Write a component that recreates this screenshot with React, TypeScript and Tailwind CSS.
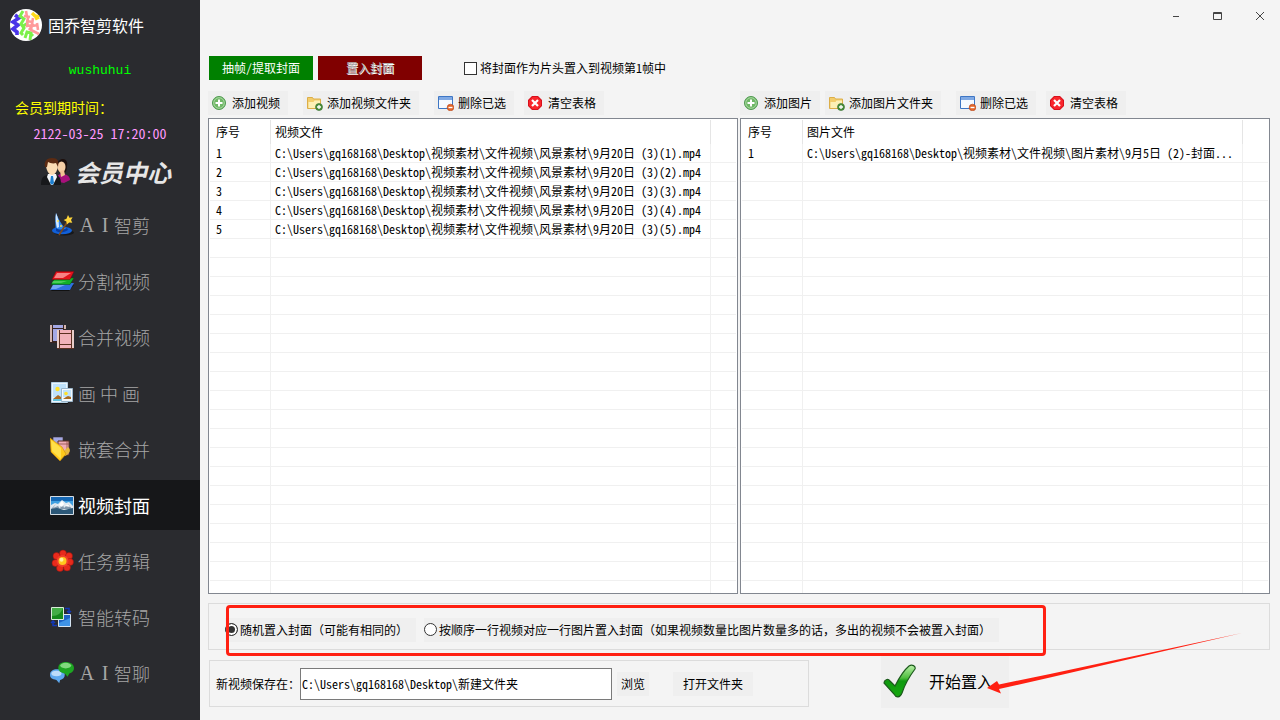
import React from 'react';

const videoFiles = [1, 2, 3, 4, 5].map((n) => `C:\\Users\\gq168168\\Desktop\\视频素材\\文件视频\\风景素材\\9月20日 (3)(${n}).mp4`);
const imageFiles = ['C:\\Users\\gq168168\\Desktop\\视频素材\\文件视频\\图片素材\\9月5日 (2)-封面...'];

function Logo() {
    return (
        <svg viewBox="0 0 32 32" className="size-8 shrink-0">
            <circle cx="16" cy="16" r="16" fill="#fff" />
            <g fill="none">
                <path d="M5 6l4 3-6 4 5 3-5 4 4 3v3" stroke="#4a35e8" strokeWidth="3.600" />
                <path d="M13 2l-3 5 4 3-3 5 3 4-3 5 2 2M13 17l5-3M15 29l2-6 4 1-1 7M20 24l3 3" stroke="#7cf04a" strokeWidth="3" />
                <path d="M16 2l1 6M14 7l6 1M16 12l7 1M18 8l-1 9 7-1M23 9l-2 12 8 4M19 21l3-4 6-1M27 14l1 7" stroke="#ff9a9a" strokeWidth="2.600" />
                <path d="M22 4l3 3 4 1M25 10l4-2" stroke="#ffd91a" strokeWidth="3.400" />
            </g>
        </svg>
    );
}

function PeopleIcon() {
    return (
        <svg viewBox="0 0 30 30" className="h-[30px] w-[30px] shrink-0">
            <path d="M16 23c0-5 2-6 5-6 4 0 8 2 8 6l-6 3-5-1z" fill="#a8107c" />
            <path d="M16 9c0-5 3-7 6-7s5 3 4 7c0 4-1 6-3 8l-6-3z" fill="#1d0f0c" />
            <ellipse cx="20.500" cy="10" rx="4" ry="5.500" fill="#f6cfa6" />
            <path d="M19 14l4-1 1 5-4 2z" fill="#f3c193" />
            <path d="M0 28c0-7 2-9 6-10h9c4 1 5 4 5 10z" fill="#17181b" />
            <path d="M7 17h8l1 3-4 8h-2l-4-8z" fill="#f2f5f8" />
            <path d="M10 19h2l1 7-2 2-2-2z" fill="#1d7fd0" />
            <path d="M5 8c0-3 2-5 6-5s6 2 6 5c0 5-3 10-6 10S5 13 5 8z" fill="#fbdcb4" />
            <path d="M4 10C3 5 5 1 11 1s7 3 6 9l-2-4c-3 1-6 0-8-1l-1 5z" fill="#5c2b12" />
        </svg>
    );
}

function WizardIcon() {
    return (
        <svg viewBox="0 0 24 24" className="size-6 shrink-0">
            <ellipse cx="14" cy="19.500" rx="10" ry="3" fill="#17181a" />
            <ellipse cx="12" cy="17.500" rx="10" ry="3.800" fill="#1160d8" />
            <path d="M6 0c-1 6-1 12 0 17 3 2 8 2 11-1-5-3-8-9-11-16z" fill="#2f86ee" />
            <path d="M6 0c-1 6 0 11 1 15l2-1C9 9 8 4 6 0z" fill="#d3e9ff" />
            <path d="M6 15c3 2 7 2 11 0l1 2c-4 3-9 3-12 1z" fill="#0a3da0" />
            <circle cx="8" cy="8" r="1" fill="#ffe24a" />
            <circle cx="11" cy="13" r="1" fill="#ffe24a" />
            <path d="M9 22l9-14" stroke="#7b4a1c" strokeWidth="1.600" />
            <path d="M18 2l1.400 2.700 3.200-.4-1.600 2.700 1.300 2.800-3.100-.3-2.300 2-.5-3-2.800-1.500 2.900-1.300z" fill="#ffd63a" />
        </svg>
    );
}

function LayersIcon() {
    return (
        <svg viewBox="0 0 24 24" className="h-6 w-6 shrink-0">
            <path d="M5 16h19l-5 6H1z" fill="#111" />
            <path d="M4 14h20l-4 7H0z" fill="#2f6fe0" />
            <path d="M3 16h12L6 20H1z" fill="#8fbcfc" opacity=".7" />
            <path d="M5 9h19l-4 6.500H1z" fill="#12b02a" stroke="#084d10" strokeWidth=".5" />
            <path d="M3 12h14l-6 2H2z" fill="#6fe07a" opacity=".6" />
            <path d="M6 2.500h18l-4 8H2z" fill="#e3121c" stroke="#7c070c" strokeWidth=".5" />
            <path d="M7 4h14l-8 5H4z" fill="#ffb0b0" opacity=".7" />
        </svg>
    );
}

function FilmsIcon() {
    return (
        <svg viewBox="0 0 24 24" className="size-6 shrink-0">
            <path d="M0 0h15v18H0z" fill="#3a2420" />
            <path d="M3 0h10v3H3zM3 4h10v12H3z" fill="#a3a8e4" />
            <path d="M0 0h2v17H0zM14 0h2v4h-2z" fill="#d3b5b0" />
            <path d="M7 5h17v19H7z" fill="#5b3020" />
            <path d="M10 5h11v3H10zM10 9h11v10H10zM10 20h11v3H10z" fill="#f2b2ba" />
            <path d="M7 5h2v18H7zM22 5h2v18h-2z" fill="#e9cdc8" />
        </svg>
    );
}

function PicturesIcon() {
    return (
        <svg viewBox="0 0 24 24" className="size-6 shrink-0">
            <path d="M2 2h16v21H2z" fill="#111" />
            <path d="M1.500 1.500h16v20h-16z" fill="#eaf5fd" stroke="#b5cfe2" />
            <path d="M3 3h13v13H3z" fill="#bfe2fb" />
            <circle cx="7.500" cy="8" r="2.200" fill="#ffe12b" />
            <path d="M3 18l5-4 3 2 4-4v6z" fill="#a86a22" />
            <path d="M3 18h12v2H3z" fill="#63c2dc" />
            <path d="M11.500 7.500h11v13h-11z" fill="#f4f9fd" stroke="#9bb7cc" />
            <path d="M13 9h8v7h-8z" fill="#bfe2fb" />
            <circle cx="16" cy="12.500" r="1.800" fill="#ffe12b" />
            <path d="M13 18l3-2 2-1 3 1v2z" fill="#a86a22" />
        </svg>
    );
}

function FolderFilmIcon() {
    return (
        <svg viewBox="0 0 24 24" className="size-6 shrink-0">
            <path d="M3 0h10v13H3z" fill="#a3a8e4" stroke="#40302c" strokeWidth=".6" />
            <path d="M8 4h11v14H8z" fill="#efabb4" stroke="#5b3020" />
            <path d="M8 7h11M17 4v14" stroke="#8d5048" strokeWidth=".8" />
            <path d="M18 10c4 3 1 7-3 9l-3-3z" fill="#e8b93c" />
            <path d="M0 1l12 9 4 7-6 7L1 15z" fill="#ffc91a" stroke="#c98b0a" strokeWidth=".6" />
            <path d="M1 3l10 8v11L2 14z" fill="#ffe04a" />
        </svg>
    );
}

function MountainIcon() {
    return (
        <svg viewBox="0 0 24 24" className="size-6 shrink-0">
            <path d="M.500 3.500h23v18H.500z" fill="#1668b4" stroke="#d5dde4" />
            <path d="M1 8h22v6H1z" fill="#3f9fe0" />
            <path d="M1 12l4-2 3 1 4-4 4 3 3-1 4 4v4H1z" fill="#dfe8f0" />
            <path d="M6 11l-3 4 5-2 2 3 2-7 2 6 4-4 4 5H1z" fill="#8097ac" />
            <path d="M9 12l3-4 2 3-2 3zM15 13l3-2 2 3z" fill="#fff" />
            <path d="M1 16l6-1 7 2 9-2v6H1z" fill="#2c5878" />
        </svg>
    );
}

function FlowerIcon() {
    return (
        <svg viewBox="0 0 24 24" className="size-6 shrink-0">
            <g fill="#e82a1c" stroke="#98120c" strokeWidth=".5">
                <circle cx="13" cy="4.500" r="3.500" />
                <circle cx="19" cy="7" r="3.500" />
                <circle cx="20" cy="13" r="3.500" />
                <circle cx="17" cy="18.500" r="3.500" />
                <circle cx="10" cy="19" r="3.500" />
                <circle cx="5.500" cy="14" r="3.500" />
                <circle cx="6.500" cy="7" r="3.500" />
            </g>
            <circle cx="12.500" cy="12" r="6" fill="#f0402a" />
            <circle cx="12.500" cy="12" r="4" fill="#ffc81e" />
            <circle cx="11.500" cy="10.800" r="2" fill="#fff0a0" />
        </svg>
    );
}

function ConvertIcon() {
    return (
        <svg viewBox="0 0 24 24" className="size-6 shrink-0">
            <path d="M8.500 9.500h12v12h-12z" fill="#1c62c4" stroke="#d5e4f2" />
            <path d="M9 18l11-5v8H9z" fill="#3f93e6" />
            <path d="M1.500 2.500h12v12h-12z" fill="#168a1c" stroke="#d8ecd8" />
            <path d="M2 3h11c-2 5-5 8-11 8z" fill="#62c562" opacity=".6" />
            <path d="M15 3.500h4v4M17 6l2 2 2-2M7 20.500H3v-3M1 18l2-2 2 2" fill="none" stroke="#1238b8" strokeWidth="1.500" />
        </svg>
    );
}

function ChatIcon() {
    return (
        <svg viewBox="0 0 26 24" className="size-6 shrink-0">
            <path d="M8 8c5 0 8 2 8 6 0 3-2 5-5 5.500L10 23l-3-3.500C2 19 0 17 0 14c0-4 3-6 8-6z" fill="#5ea8ee" />
            <ellipse cx="7" cy="12.500" rx="5.500" ry="3" fill="#d3e9fd" opacity=".8" />
            <path d="M17 0c5 0 9 2.500 9 6.500 0 3-2 5-5 6L19 16l-3-3.500c-4-.5-7-3-7-6C9 2.500 12 0 17 0z" fill="#1da522" />
            <ellipse cx="17" cy="4" rx="6" ry="3" fill="#9be696" opacity=".8" />
        </svg>
    );
}

function AddIcon() {
    return (
        <svg viewBox="0 0 16 16" className="size-4 shrink-0">
            <circle cx="7" cy="8" r="6.500" fill="#6fb766" stroke="#4f9a50" />
            <circle cx="7" cy="8" r="5.300" fill="none" stroke="#b6e0b0" strokeWidth=".8" />
            <path d="M7 4.500v7M3.500 8h7" stroke="#fff" strokeWidth="2" />
        </svg>
    );
}

function AddFolderIcon() {
    return (
        <svg viewBox="0 0 16 16" className="size-4 shrink-0">
            <path d="M.500 13.500v-11h5l1 1.500h7v9.500z" fill="#f3cd6b" stroke="#dcae48" />
            <path d="M1.500 13V7h5l1-1.500H13V13z" fill="#fdf0b5" />
            <circle cx="12" cy="12" r="3.500" fill="#4c8f3c" stroke="#2f6b28" strokeWidth=".6" />
            <path d="M12 10v4M10 12h4" stroke="#fff" strokeWidth="1.300" />
        </svg>
    );
}

function DeleteIcon() {
    return (
        <svg viewBox="0 0 16 16" className="size-4 shrink-0">
            <path d="M.500 1.500h14v12H.500z" fill="#f6faff" stroke="#3e76c4" />
            <path d="M1 2h13v3H1z" fill="#7fa9e4" />
            <circle cx="12.500" cy="12.500" r="3.300" fill="#e5662a" stroke="#b3451a" strokeWidth=".6" />
            <path d="M10.500 12.500h4" stroke="#fff" strokeWidth="1.400" />
        </svg>
    );
}

function ClearIcon() {
    return (
        <svg viewBox="0 0 16 16" className="size-4 shrink-0">
            <path d="M4 1h6l4 4v6l-4 4H4l-4-4V5z" fill="#d8101c" />
            <path d="M4.500 2h5L13 5.500v5L9.500 14h-5L1 10.500v-5z" fill="#f9262c" />
            <path d="M4 5l6 6M10 5l-6 6" stroke="#fff" strokeWidth="2.200" />
        </svg>
    );
}

function CheckIcon() {
    return (
        <svg viewBox="0 0 34 34" className="h-[34px] w-[34px] shrink-0">
            <defs>
                <linearGradient id="check" x1="0" y1="0" x2="0" y2="1">
                    <stop offset="0" stopColor="#b9f0a8" />
                    <stop offset=".4" stopColor="#4fbe3f" />
                    <stop offset=".5" stopColor="#0f9a0f" />
                    <stop offset="1" stopColor="#16a80f" />
                </linearGradient>
            </defs>
            <path
                d="M1 19c0-3 4-5 6-2l5 5C16 14 20 7 26 2c3-2 7 0 6 3-6 8-10 15-13 24-2 5-6 5-8 1z"
                fill="url(#check)"
                stroke="#1c5a1c"
                strokeWidth="1.200"
            />
        </svg>
    );
}

function Wide({ text }: { text: string }) {
    return <span className="w-[18px] text-center font-['Liberation_Serif',serif] text-xl font-normal">{text}</span>;
}

const menu = [
    { icon: <WizardIcon />, label: <><Wide text="A" /><Wide text="I" />智剪</> },
    { icon: <LayersIcon />, label: '分割视频' },
    { icon: <FilmsIcon />, label: '合并视频' },
    { icon: <PicturesIcon />, label: '画 中 画' },
    { icon: <FolderFilmIcon />, label: '嵌套合并' },
    { icon: <MountainIcon />, label: '视频封面', active: true },
    { icon: <FlowerIcon />, label: '任务剪辑' },
    { icon: <ConvertIcon />, label: '智能转码' },
    { icon: <ChatIcon />, label: <><Wide text="A" /><Wide text="I" />智聊</> },
];

function Sidebar() {
    return (
        <aside className="flex w-[200px] shrink-0 flex-col bg-[#2a2b2f]">
            <div className="mt-[9px] flex items-center gap-[6px] pl-[10px] text-base leading-8 text-white">
                <Logo />
                固乔智剪软件
            </div>
            <div className="mt-5 text-center font-['Liberation_Mono',monospace] text-[13px] leading-5 text-[#00ff00]">wushuhui</div>
            <div className="mt-4 pl-[15px] text-sm text-[#ffff00]">会员到期时间：</div>
            <div className="mt-[6px] text-center text-sm text-[#ff99ff]">2122-03-25 17:20:00</div>
            <a href="#vip" className="mt-[13px] flex items-center gap-1 pl-[41px] text-2xl leading-8 font-bold text-[#e6e6e6] italic">
                <PeopleIcon />
                会员中心
            </a>
            <nav className="mt-3 flex flex-col gap-[6px]">
                {menu.map((item, i) => (
                    <a
                        key={i}
                        href="#menu"
                        className={`flex h-[50px] items-center gap-1 pl-[50px] text-lg ${item.active ? 'bg-[#161719] text-white' : 'font-light text-[#a6a6a6]'}`}
                    >
                        {item.icon}
                        <span className="flex items-center leading-6 whitespace-pre [font-feature-settings:normal]">{item.label}</span>
                    </a>
                ))}
            </nav>
        </aside>
    );
}

function ToolButton({ icon, children }: { icon: React.ReactNode; children: React.ReactNode }) {
    return (
        <button type="button" className="flex h-6 items-center gap-1 bg-[#efefef] pr-2 pl-1 whitespace-nowrap">
            {icon}
            {children}
        </button>
    );
}

function FileTable({ title, files }: { title: string; files: string[] }) {
    const rows = Array.from({ length: 24 }, (_, i) => files[i]);
    return (
        <div className="min-h-0 flex-1 overflow-hidden border border-[#828790] bg-white p-px">
            <table className="w-full table-fixed border-separate border-spacing-0">
                <thead>
                    <tr className="h-6 text-left">
                        <th className="w-[61px] border-r border-[#e5e5e5] pl-[6px] font-normal">序号</th>
                        <th className="w-[440px] border-r border-[#e5e5e5] pl-1 font-normal">{title}</th>
                        <th></th>
                    </tr>
                </thead>
                <tbody>
                    {rows.map((file, i) => (
                        <tr key={i} className="h-[19px]">
                            <td className="border-r border-b border-[#f0f0f0] pl-[6px]">{file ? i + 1 : ''}</td>
                            <td className="truncate border-r border-b border-[#f0f0f0] pl-1">{file}</td>
                            <td className="border-b border-[#f0f0f0]"></td>
                        </tr>
                    ))}
                </tbody>
            </table>
        </div>
    );
}

export default function App() {
    return (
        <div className="flex h-screen overflow-hidden bg-[#f4f4f4] font-['Noto_Sans_CJK_SC',sans-serif] text-xs text-black [font-feature-settings:'hwid']">
            <Sidebar />
            <main className="flex min-w-0 flex-1 flex-col pr-[10px] pb-3 pl-2">
                <header className="-mr-[10px] flex h-8 shrink-0 justify-end text-[#444444]">
                    <button type="button" aria-label="最小化" className="flex w-[42px] items-center justify-center">
                        <svg viewBox="0 0 12 12" className="size-3"><path d="M4 6.500h6" stroke="currentColor" /></svg>
                    </button>
                    <button type="button" aria-label="最大化" className="flex w-[42px] items-center justify-center">
                        <svg viewBox="0 0 12 12" className="size-3">
                            <path d="M2.500 2.500h8v7h-8zM2 3.500h9" fill="none" stroke="currentColor" />
                        </svg>
                    </button>
                    <button type="button" aria-label="关闭" className="flex w-[42px] items-center justify-center">
                        <svg viewBox="0 0 12 12" className="size-3"><path d="M3 2l8 8M11 2l-8 8" stroke="currentColor" /></svg>
                    </button>
                </header>

                <div className="mt-6 flex items-center pl-px">
                    <button type="button" className="h-6 w-[104px] bg-[#008000] text-white">抽帧/提取封面</button>
                    <button type="button" className="ml-[5px] h-6 w-[104px] bg-[#800000] text-[#b0b0b0] [text-shadow:1px_1px_0_#fff]">
                        置入封面
                    </button>
                    <label className="ml-[42px] flex items-center gap-[3px]">
                        <input type="checkbox" className="size-[13px] appearance-none border border-[#333333] bg-white" />
                        将封面作为片头置入到视频第1帧中
                    </label>
                </div>

                {/* 视频列表 / 图片列表 */}
                <div className="mt-[11px] flex min-h-0 flex-1 gap-[2px]">
                    <section className="flex min-w-0 flex-1 flex-col gap-[3px]">
                        <div className="flex">
                            <ToolButton icon={<AddIcon />}>添加视频</ToolButton>
                            <div className="mr-[15px] ml-[15px]">
                                <ToolButton icon={<AddFolderIcon />}>添加视频文件夹</ToolButton>
                            </div>
                            <ToolButton icon={<DeleteIcon />}>删除已选</ToolButton>
                            <div className="ml-[10px]">
                                <ToolButton icon={<ClearIcon />}>清空表格</ToolButton>
                            </div>
                        </div>
                        <FileTable title="视频文件" files={videoFiles} />
                    </section>
                    <section className="flex min-w-0 flex-1 flex-col gap-[3px]">
                        <div className="flex">
                            <ToolButton icon={<AddIcon />}>添加图片</ToolButton>
                            <div className="mr-[15px] ml-[5px]">
                                <ToolButton icon={<AddFolderIcon />}>添加图片文件夹</ToolButton>
                            </div>
                            <ToolButton icon={<DeleteIcon />}>删除已选</ToolButton>
                            <div className="ml-[10px]">
                                <ToolButton icon={<ClearIcon />}>清空表格</ToolButton>
                            </div>
                        </div>
                        <FileTable title="图片文件" files={imageFiles} />
                    </section>
                </div>

                <div className="relative mt-[9px] flex h-[47px] shrink-0 items-center gap-2 border border-[#dcdcdc] pt-[6px] pl-4 whitespace-nowrap [font-feature-settings:normal]">
                    <label className="flex h-6 items-center gap-[2px] bg-[#efefef] pr-2">
                        <input
                            type="radio"
                            name="mode"
                            defaultChecked
                            className="size-[13px] appearance-none rounded-full border border-[#333333] bg-white checked:bg-[#333333] checked:shadow-[inset_0_0_0_2px_#fff]"
                        />
                        随机置入封面（可能有相同的）
                    </label>
                    <label className="flex h-6 items-center gap-[2px] bg-[#efefef] pr-2">
                        <input
                            type="radio"
                            name="mode"
                            className="size-[13px] appearance-none rounded-full border border-[#333333] bg-white checked:bg-[#333333] checked:shadow-[inset_0_0_0_2px_#fff]"
                        />
                        按顺序一行视频对应一行图片置入封面（如果视频数量比图片数量多的话，多出的视频不会被置入封面）
                    </label>
                    <div className="pointer-events-none absolute top-px left-[17px] h-[51px] w-[820px] rounded-[4px] border-3 border-[#ff2012]"></div>
                </div>

                <div className="mt-[6px] flex h-[52px] shrink-0 items-end pl-px">
                    <div className="mb-px flex h-[47px] items-center border border-[#dcdcdc] pr-[55px] pl-[6px] whitespace-nowrap">
                        <label htmlFor="savePath">新视频保存在：</label>
                        <input
                            id="savePath"
                            type="text"
                            defaultValue="C:\Users\gq168168\Desktop\新建文件夹"
                            className="h-8 w-[312px] border border-[#7a7a7a] bg-white px-px"
                        />
                        <button type="button" className="ml-[5px] h-6 w-8 bg-[#efefef] text-center">浏览</button>
                        <button type="button" className="ml-6 h-6 w-20 bg-[#efefef]">打开文件夹</button>
                    </div>
                    <div className="relative ml-[72px]">
                        <button type="button" className="flex h-[52px] w-32 items-center gap-3 bg-[#efefef] pb-[2px] pl-[2px] text-base whitespace-nowrap">
                            <CheckIcon />
                            开始置入
                        </button>
                        <svg viewBox="0 0 260 66" className="pointer-events-none absolute -top-7 left-[104px] h-[66px] w-[260px]">
                            <path d="M2 60l10-7 2 3.500L65 46 257 5 65 49.500 14 61l2 4.500z" fill="#ff2012" />
                        </svg>
                    </div>
                </div>
            </main>
        </div>
    );
}
